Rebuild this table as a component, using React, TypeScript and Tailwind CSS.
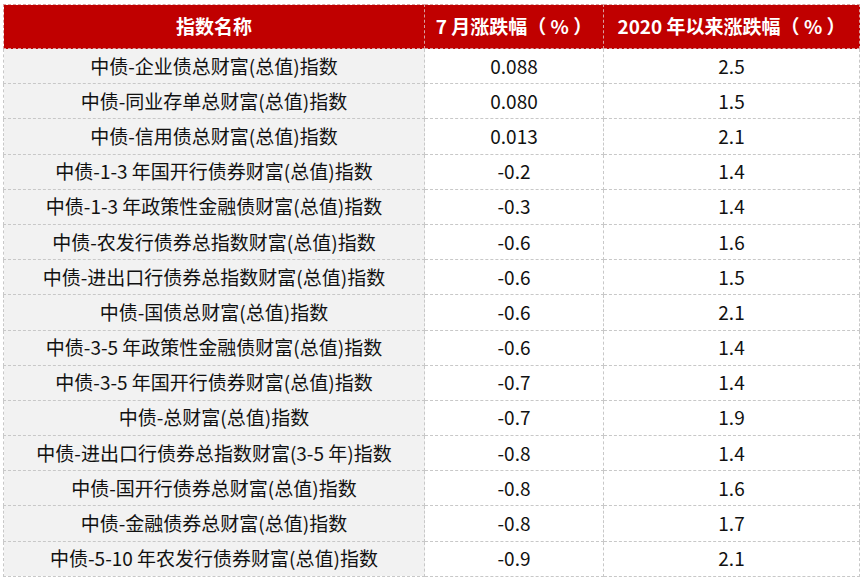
import React from 'react'

const rows: [string, string, string][] = [
  ['中债-企业债总财富(总值)指数', '0.088', '2.5'],
  ['中债-同业存单总财富(总值)指数', '0.080', '1.5'],
  ['中债-信用债总财富(总值)指数', '0.013', '2.1'],
  ['中债-1-3 年国开行债券财富(总值)指数', '-0.2', '1.4'],
  ['中债-1-3 年政策性金融债财富(总值)指数', '-0.3', '1.4'],
  ['中债-农发行债券总指数财富(总值)指数', '-0.6', '1.6'],
  ['中债-进出口行债券总指数财富(总值)指数', '-0.6', '1.5'],
  ['中债-国债总财富(总值)指数', '-0.6', '2.1'],
  ['中债-3-5 年政策性金融债财富(总值)指数', '-0.6', '1.4'],
  ['中债-3-5 年国开行债券财富(总值)指数', '-0.7', '1.4'],
  ['中债-总财富(总值)指数', '-0.7', '1.9'],
  ['中债-进出口行债券总指数财富(3-5 年)指数', '-0.8', '1.4'],
  ['中债-国开行债券总财富(总值)指数', '-0.8', '1.6'],
  ['中债-金融债券总财富(总值)指数', '-0.8', '1.7'],
  ['中债-5-10 年农发行债券财富(总值)指数', '-0.9', '2.1'],
]

export default function App() {
  return (
    <div className="w-[864px] h-[583px] bg-white pl-[3px] pt-[4px] font-['Noto_Sans_CJK_SC',sans-serif]">
      <table className="border-collapse table-fixed w-[856px] text-[19px] text-[#111]">
        <colgroup>
          <col className="w-[421px]" />
          <col className="w-[179px]" />
          <col className="w-[256px]" />
        </colgroup>
        <thead>
          <tr className="h-[44px] bg-[#c00000] text-white font-bold leading-none">
            <th className="border border-dashed border-[#d9a0a0] text-center pb-[3px]">指数名称</th>
            <th className="border border-dashed border-[#d9a0a0] text-center pb-[3px]">7 月涨跌幅（ % ）</th>
            <th className="border border-dashed border-[#d9a0a0] text-center pb-[3px]">2020 年以来涨跌幅（ % ）</th>
          </tr>
        </thead>
        <tbody>
          {rows.map(([name, m, y]) => (
            <tr key={name} className="h-[35.2px] leading-none">
              <td className="border border-dashed border-[#c8c8c8] bg-[#f2f2f2] text-center pb-[2px]">{name}</td>
              <td className="border border-dashed border-[#c8c8c8] text-center pb-[2px]">{m}</td>
              <td className="border border-dashed border-[#c8c8c8] text-center pb-[2px]">{y}</td>
            </tr>
          ))}
        </tbody>
      </table>
    </div>
  )
}
